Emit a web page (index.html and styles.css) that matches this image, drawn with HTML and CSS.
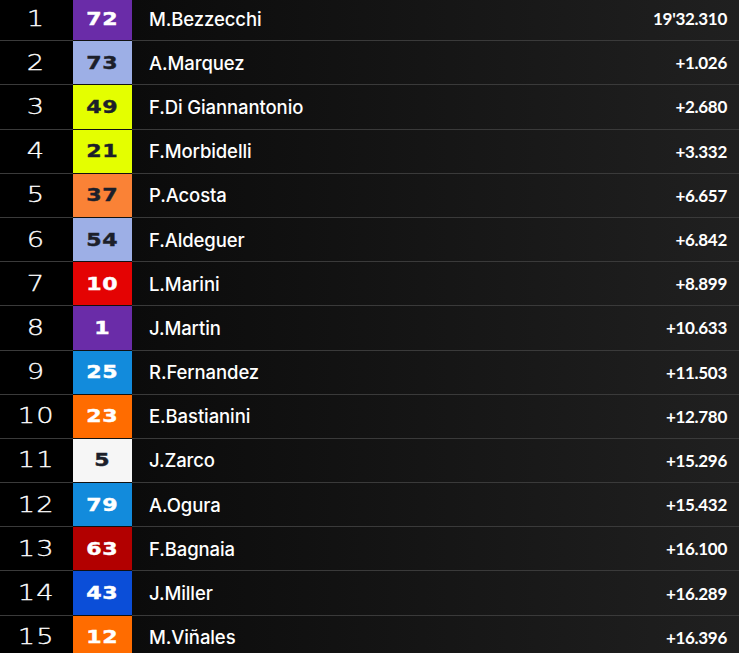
FILE: index.html
```html
<!DOCTYPE html>
<html>
<head>
<meta charset="utf-8">
<link rel="stylesheet" href="styles.css">
</head>
<body>
<div class="table">
  <div class="row"><div class="pos"><span>1</span></div><div class="num c-purple light"><span>72</span></div><div class="main"><span class="name">M.Bezzecchi</span><span class="time">19'32.310</span></div></div>
  <div class="row"><div class="pos"><span>2</span></div><div class="num c-lblue"><span>73</span></div><div class="main"><span class="name">A.Marquez</span><span class="time">+1.026</span></div></div>
  <div class="row"><div class="pos"><span>3</span></div><div class="num c-yellow"><span>49</span></div><div class="main"><span class="name">F.Di Giannantonio</span><span class="time">+2.680</span></div></div>
  <div class="row"><div class="pos"><span>4</span></div><div class="num c-yellow"><span>21</span></div><div class="main"><span class="name">F.Morbidelli</span><span class="time">+3.332</span></div></div>
  <div class="row"><div class="pos"><span>5</span></div><div class="num c-lorange"><span>37</span></div><div class="main"><span class="name">P.Acosta</span><span class="time">+6.657</span></div></div>
  <div class="row"><div class="pos"><span>6</span></div><div class="num c-lblue"><span>54</span></div><div class="main"><span class="name">F.Aldeguer</span><span class="time">+6.842</span></div></div>
  <div class="row"><div class="pos"><span>7</span></div><div class="num c-red light"><span>10</span></div><div class="main"><span class="name">L.Marini</span><span class="time">+8.899</span></div></div>
  <div class="row"><div class="pos"><span>8</span></div><div class="num c-purple light"><span>1</span></div><div class="main"><span class="name">J.Martin</span><span class="time">+10.633</span></div></div>
  <div class="row"><div class="pos"><span>9</span></div><div class="num c-blue light"><span>25</span></div><div class="main"><span class="name">R.Fernandez</span><span class="time">+11.503</span></div></div>
  <div class="row"><div class="pos"><span>10</span></div><div class="num c-orange light"><span>23</span></div><div class="main"><span class="name">E.Bastianini</span><span class="time">+12.780</span></div></div>
  <div class="row"><div class="pos"><span>11</span></div><div class="num c-white"><span>5</span></div><div class="main"><span class="name">J.Zarco</span><span class="time">+15.296</span></div></div>
  <div class="row"><div class="pos"><span>12</span></div><div class="num c-blue light"><span>79</span></div><div class="main"><span class="name">A.Ogura</span><span class="time">+15.432</span></div></div>
  <div class="row"><div class="pos"><span>13</span></div><div class="num c-dred light"><span>63</span></div><div class="main"><span class="name">F.Bagnaia</span><span class="time">+16.100</span></div></div>
  <div class="row"><div class="pos"><span>14</span></div><div class="num c-dblue light"><span>43</span></div><div class="main"><span class="name">J.Miller</span><span class="time">+16.289</span></div></div>
  <div class="row"><div class="pos"><span>15</span></div><div class="num c-orange light"><span>12</span></div><div class="main"><span class="name">M.Viñales</span><span class="time">+16.396</span></div></div>
</div>
</body>
</html>
```

FILE: styles.css
```css
html, body {
  margin: 0;
  padding: 0;
  background: #000;
  overflow: hidden;
}
.table {
  margin-top: -3px;
  display: flex;
  flex-direction: column;
}
.row {
  display: flex;
  height: 44.2px;
}
.pos {
  width: 73px;
  flex: none;
  background: #000;
  border-bottom: 1px solid #3a3a3a;
  color: #fff;
  font-family: "DejaVu Sans", sans-serif;
  font-weight: 200;
  font-size: 21px;
  display: flex;
  align-items: center;
  justify-content: center;
}
.pos span {
  display: inline-block;
  transform: scaleX(1.3);
  letter-spacing: 1px;
  -webkit-text-stroke: 0.3px #fff;
}
.num {
  width: 59px;
  flex: none;
  border-bottom: 1px solid #111;
  display: flex;
  align-items: center;
  justify-content: center;
  color: #1c1f2a;
  font-family: "DejaVu Sans", sans-serif;
  font-weight: 700;
  font-size: 17px;
}
.num span {
  display: inline-block;
  transform: scaleX(1.3);
  letter-spacing: 0.5px;
  -webkit-text-stroke: 0.4px currentColor;
}
.num.light { color: #fff; }
.c-purple { background: #6a2ca8; }
.c-lblue { background: #9dafe6; }
.c-yellow { background: #e4ff00; }
.c-lorange { background: #fa8236; }
.c-red { background: #e40303; }
.c-blue { background: #128bdc; }
.c-orange { background: #ff6c00; }
.c-white { background: #f6f6f6; }
.c-dred { background: #b20000; }
.c-dblue { background: #0b4ed8; }
.main {
  flex: 1;
  display: flex;
  align-items: center;
  justify-content: space-between;
  padding: 0 12px 0 17px;
  border-bottom: 1px solid #3a3a3a;
  background: linear-gradient(to right, #0b0b0b, #202020);
  color: #fff;
}
.name {
  font-family: "Inter", sans-serif;
  font-size: 18.5px;
  font-weight: 500;
  letter-spacing: -0.1px;
}
.time {
  font-family: "Lato", sans-serif;
  font-size: 17px;
  font-weight: 700;
  letter-spacing: -0.3px;
}
```
